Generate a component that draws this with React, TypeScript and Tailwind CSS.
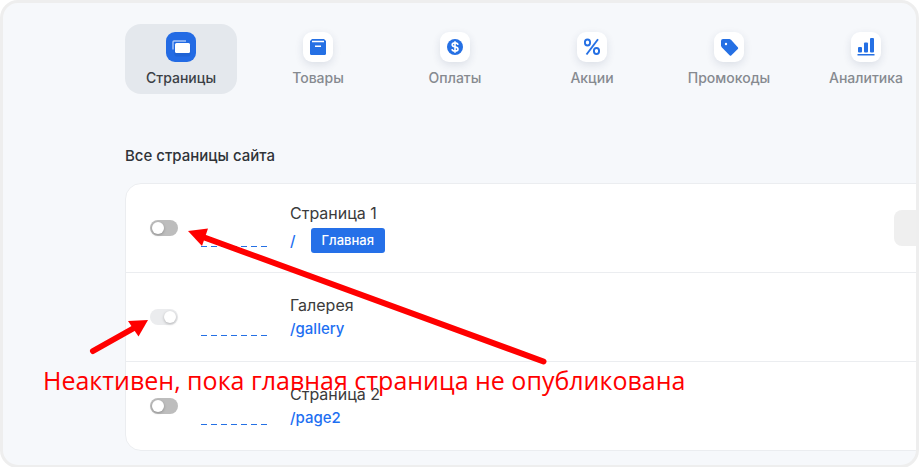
import type { ReactNode } from "react";

type Tab = { label: string; icon: ReactNode; active?: boolean };
type Page = { title: string; path: string; on: boolean; disabled?: boolean; main?: boolean };

const tabs: Tab[] = [
  {
    label: "Страницы",
    active: true,
    icon: (
      <>
        <path d="M7 17.500V10Q7 9 8 9H20" fill="none" stroke="#a9c6f8" strokeWidth="1.400" />
        <path d="M9 12H24.500V22Q24 24.500 22 24.500H10Q8 24 8.500 20Z" fill="#1857bd" opacity=".4" />
        <rect x="9" y="11" width="15" height="10" rx="1.500" fill="#fff" />
      </>
    ),
  },
  {
    label: "Товары",
    icon: (
      <>
        <path d="M9 7H21L23 9V21.500Q23 23 21.500 23H8.500Q7 23 7 21.500V9Z" fill="#2570e4" />
        <path d="M9 9.500H21" stroke="#fff" strokeWidth="1.300" />
        <path d="M12 14.300H18" stroke="#fff" strokeWidth="1.500" />
      </>
    ),
  },
  {
    label: "Оплаты",
    icon: (
      <>
        <circle cx="15" cy="15" r="8" fill="#2570e4" />
        <path
          d="M15 9.200V20.800M18 12.800Q17.600 10.900 15 10.900Q12.200 10.900 12.200 12.800Q12.200 14.500 15 14.900Q18 15.300 18 17.200Q18 19.100 15 19.100Q12.300 19.100 12 17.100"
          fill="none"
          stroke="#fff"
          strokeWidth="1.600"
        />
      </>
    ),
  },
  {
    label: "Акции",
    icon: (
      <g fill="none" stroke="#2570e4" strokeWidth="1.900">
        <ellipse cx="10.500" cy="10.500" rx="2.600" ry="3" />
        <ellipse cx="19.500" cy="19" rx="2.600" ry="3" />
        <path d="M21 7.200L9.500 22.500" />
      </g>
    ),
  },
  {
    label: "Промокоды",
    icon: (
      <>
        <path d="M9 7H15.500L17 7.700L24 15.500Q24.500 16.300 23.800 17L17.200 23.500Q16.500 24 15.800 23.500L7.700 15.300L7 13.800V9Q7 7 9 7Z" fill="#2570e4" />
        <circle cx="12" cy="12" r="1.200" fill="#fff" />
      </>
    ),
  },
  {
    label: "Аналитика",
    icon: (
      <g fill="#2570e4">
        <rect x="7" y="15" width="4" height="5.500" rx="1" />
        <rect x="13" y="10.500" width="4" height="10" rx="1" />
        <rect x="19" y="6" width="4" height="14.500" rx="1" />
        <rect x="6.500" y="22" width="17" height="1.500" />
      </g>
    ),
  },
];

const pages: Page[] = [
  { title: "Страница 1", path: "/", on: false, main: true },
  { title: "Галерея", path: "/gallery", on: true, disabled: true },
  { title: "Страница 2", path: "/page2", on: false },
];

function Toggle({ page }: { page: Page }) {
  return (
    <label className="relative block h-4 w-7 shrink-0">
      <input
        type="checkbox"
        role="switch"
        aria-label={page.title}
        defaultChecked={page.on}
        disabled={page.disabled}
        className="peer block h-4 w-7 appearance-none rounded-full bg-[#bdbdbd] checked:bg-[#2570e4] disabled:bg-[#ebecee]"
      />
      <span className="pointer-events-none absolute top-0.5 left-0.5 size-3 rounded-full bg-white shadow-[0_1px_3px_rgba(0,0,0,0.25)] peer-checked:left-3.5" />
    </label>
  );
}

function PageRow({ page }: { page: Page }) {
  return (
    <li className="flex h-[89px] items-center border-b border-[#ebedf0] pl-6 last:h-[88px] last:border-b-0">
      <Toggle page={page} />
      <svg className="mt-9 ml-[23px] h-px w-[67px] shrink-0" aria-hidden="true">
        <path d="M0 .5H67" stroke="#2570e4" strokeDasharray="6 4" />
      </svg>
      <div className={`ml-[22px] flex grow flex-col ${page.main ? "gap-[3px] pb-0.5" : ""}`}>
        <h2 className="text-base leading-6 text-[#3b3b3b]">{page.title}</h2>
        <div className="flex items-center gap-[15px]">
          <a href={page.path} className="text-[15px] leading-6 font-medium text-[#1d6ff2]">
            {page.path}
          </a>
          {page.main && (
            <span className="rounded-[3px] bg-[#2570e8] px-[11px] text-[13px] leading-[25px] font-medium text-white">Главная</span>
          )}
        </div>
      </div>
      {page.main && <button type="button" aria-label="Действия" className="h-9 w-16 shrink-0 rounded-lg bg-[#efefef]" />}
    </li>
  );
}

export default function App() {
  return (
    <main className="relative overflow-hidden rounded-[18px] border-3 border-[#eeeeee] bg-[#f6f8fb] pt-[21px] pb-3.5 pl-[122px] font-['Inter',sans-serif]">
      <nav className="flex gap-[25px]">
        {tabs.map((tab) => (
          <button
            key={tab.label}
            type="button"
            className={`flex h-[70px] w-28 shrink-0 flex-col items-center gap-1.5 rounded-2xl pt-2 text-sm leading-5 font-medium ${
              tab.active ? "bg-[#e4e8ed] text-[#3b3f45]" : "text-[#868a90]"
            }`}
          >
            <svg
              viewBox="0 0 30 30"
              aria-hidden="true"
              className={`size-[30px] rounded-[9px] ${tab.active ? "bg-[#236be4]" : "bg-white shadow-[0_3px_8px_rgba(30,50,90,0.12)]"}`}
            >
              {tab.icon}
            </svg>
            {tab.label}
          </button>
        ))}
      </nav>
      <h1 className="mt-[52px] text-[15px] leading-5 font-medium text-[#2f3338]">Все страницы сайта</h1>
      <ul className="mt-[17px] -mr-[43px] rounded-2xl border border-[#ebedf0] bg-white">
        {pages.map((page) => (
          <PageRow key={page.title} page={page} />
        ))}
      </ul>
      <svg className="pointer-events-none absolute -top-[3px] -left-[3px] h-[467px] w-[700px]" viewBox="0 0 700 467" aria-hidden="true">
        <g fill="#f00" stroke="#f00" strokeLinecap="round">
          <path d="M543.500 361.500L203 237" strokeWidth="6" />
          <path d="M188 231L208 228.500L202 246Z" stroke="none" />
          <path d="M93 351L134 328" strokeWidth="6" />
          <path d="M148 320L128 321L138.500 336.500Z" stroke="none" />
        </g>
      </svg>
      <p className="pointer-events-none absolute top-[361px] left-10 font-['Open_Sans',sans-serif] text-[25px] leading-8 whitespace-nowrap text-[#f00]">
        Неактивен, пока главная страница не опубликована
      </p>
    </main>
  );
}
